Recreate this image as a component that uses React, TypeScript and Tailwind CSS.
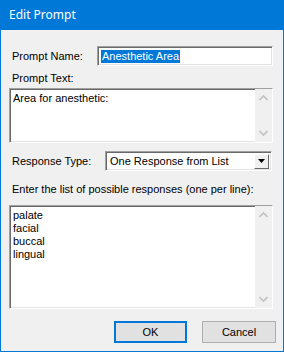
import React from 'react'

const ui = { fontFamily: '"Liberation Sans", Arial, sans-serif' }

// sunken Win32 edit border
const sunken =
    'border border-t-[#a0a0a0] border-l-[#a0a0a0] border-r-[#fff] border-b-[#fff] shadow-[inset_1px_1px_0_#696969,inset_-1px_-1px_0_#e3e3e3] bg-white'

function Chevron({ up }: { up?: boolean }) {
    return (
        <svg width="9" height="6" viewBox="0 0 9 6" className="block">
            <path
                d={up ? 'M0.5 5L4.5 1L8.5 5' : 'M0.5 1L4.5 5L8.5 1'}
                fill="none"
                stroke="#c1c1c1"
                strokeWidth="1.6"
            />
        </svg>
    )
}

function ScrollBar() {
    return (
        <div className="w-[17px] bg-[#f0f0f0] flex flex-col items-center justify-between py-[6px]">
            <Chevron up />
            <Chevron />
        </div>
    )
}

export default function App() {
    return (
        <div className="w-[284px] h-[352px] bg-[#0078d7] px-px pb-px flex flex-col" style={ui}>
            <div className="h-[30px] flex items-center pl-[8px] text-white text-[12px]" style={{ fontFamily: '"Noto Sans", "Open Sans", sans-serif' }}>
                Edit Prompt
            </div>
            <div className="flex-1 bg-[#f0f0f0] pl-[8px] pr-[10px] text-[11px] text-black leading-none">
                {/* prompt name */}
                <div className="flex items-center mt-[16px] h-[20px]">
                    <span className="ml-[3px] w-[85px]">Prompt Name:</span>
                    <div className={`${sunken} flex-1 h-[20px] flex items-center pl-[3px]`}>
                        <span className="bg-[#0078d7] text-white px-px py-[1px]">Anesthetic Area</span>
                    </div>
                </div>

                <div className="ml-[3px] mt-[7px]">Prompt Text:</div>
                <div className={`${sunken} mt-[4px] h-[55px] flex`}>
                    <div className="flex-1 pl-[3px] pt-[4px]">Area for anesthetic:</div>
                    <ScrollBar />
                </div>

                {/* response type */}
                <div className="flex items-center mt-[8px] h-[20px]">
                    <span className="ml-[3px] w-[93px]">Response Type:</span>
                    <div className="flex-1 h-[20px] mr-px border border-t-[#a0a0a0] border-l-[#a0a0a0] border-r-[#fff] border-b-[#fff] shadow-[inset_1px_1px_0_#696969,inset_-1px_-1px_0_#e3e3e3] bg-white flex items-center p-[2px]">
                        <span className="flex-1 pl-[2px]">One Response from List</span>
                        <div className="w-[15px] h-[15px] bg-[#f0f0f0] border border-t-[#fff] border-l-[#fff] border-r-[#696969] border-b-[#696969] flex items-center justify-center">
                            <svg width="7" height="4" viewBox="0 0 7 4">
                                <path d="M0 0H7L3.5 4Z" fill="#000" />
                            </svg>
                        </div>
                    </div>
                </div>

                <div className="ml-[3px] mt-[13px]">Enter the list of possible responses (one per line):</div>
                <div className={`${sunken} mt-[10px] h-[104px] flex`}>
                    <div className="flex-1 pl-[3px] pt-[3px] leading-[13px]">
                        <div>palate</div>
                        <div>facial</div>
                        <div>buccal</div>
                        <div>lingual</div>
                    </div>
                    <ScrollBar />
                </div>

                {/* buttons */}
                <div className="flex justify-end gap-[15px] mt-[12px] pr-[-2px]">
                    <button className="w-[73px] h-[22px] bg-[#e1e1e1] border-2 border-[#0078d7] text-[11px] flex items-center justify-center">
                        OK
                    </button>
                    <button className="w-[74px] h-[22px] bg-[#e1e1e1] border border-[#adadad] text-[11px] flex items-center justify-center -mr-[3px]">
                        Cancel
                    </button>
                </div>
            </div>
        </div>
    )
}
